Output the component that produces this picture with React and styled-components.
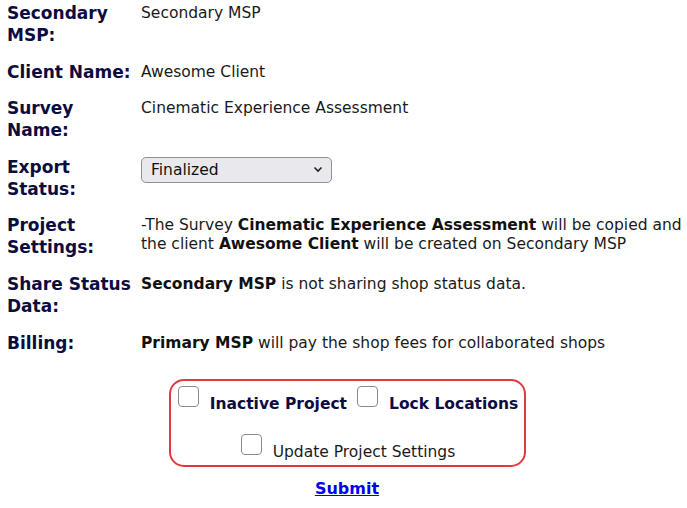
import React from "react";
import styled, { createGlobalStyle } from "styled-components";

const Global = createGlobalStyle`
  html, body { margin: 0; padding: 0; background: #fff; }
  body { font-family: "DejaVu Sans", Verdana, sans-serif; color: #1a1a1a; }
`;

const Page = styled.div`
  padding: 2px 0 0 7px;
  width: 687px;
  box-sizing: border-box;
`;

const Grid = styled.div`
  display: grid;
  grid-template-columns: 134px 1fr;
  row-gap: 14.6px;
`;

const Label = styled.div`
  font-family: "DejaVu Sans", Tahoma, sans-serif;
  font-weight: bold;
  font-size: 17px;
  line-height: 22px;
  color: #0c0c40;
`;

const Value = styled.div`
  font-size: 15.5px;
  line-height: 18.5px;
  padding-top: 2px;
  color: #1a1a1a;
  b { font-weight: bold; color: #111; }
`;

const Select = styled.div`
  width: 191px;
  height: 26px;
  box-sizing: border-box;
  margin-top: 1px;
  border: 1px solid #8f8f9d;
  border-radius: 5px;
  background: #e9e9ed;
  display: flex;
  align-items: center;
  justify-content: space-between;
  padding: 0 8px 0 9px;
  font-size: 15.5px;
  color: #111;
`;

const Actions = styled.div`
  display: flex;
  flex-direction: column;
  align-items: center;
  margin-top: 25px;
`;

const Box = styled.div`
  width: 357px;
  box-sizing: border-box;
  border: 2px solid #e03a3e;
  border-radius: 15px;
  padding: 8px 6px 4px 8px;
  display: flex;
  flex-direction: column;
  align-items: center;
  gap: 24px;
`;

const CheckRow = styled.div`
  display: flex;
  align-items: center;
  justify-content: center;
  gap: 10px;
  white-space: nowrap;
`;

const Check = styled.label`
  display: flex;
  align-items: center;
  gap: 11px;
  white-space: nowrap;
  font-size: 15.5px;
  font-weight: ${(p) => (p.$bold ? "bold" : "normal")};
  color: ${(p) => (p.$bold ? "#0c0c40" : "#1a1a1a")};
`;

const CheckBox = styled.span`
  width: 21px;
  height: 21px;
  box-sizing: border-box;
  border: 1px solid #8a8a94;
  border-radius: 4px;
  background: #fff;
  flex: none;
  margin-top: -8px;
`;

const Text = styled.span`
  margin-top: 6px;
`;

const Submit = styled.a`
  margin-top: 12px;
  font-size: 16px;
  font-weight: bold;
  color: #0000ee;
  text-decoration: underline;
  cursor: pointer;
`;

export default function App() {
  return (
    <>
      <Global />
      <Page>
        <Grid>
          <Label>Secondary<br />MSP:</Label>
          <Value>Secondary MSP</Value>
          <Label>Client Name:</Label>
          <Value>Awesome Client</Value>
          <Label>Survey<br />Name:</Label>
          <Value>Cinematic Experience Assessment</Value>
          <Label>Export<br />Status:</Label>
          <div>
            <Select>
              <span>Finalized</span>
              <svg width="10" height="7" viewBox="0 0 10 7">
                <path d="M1.5 1.5 L5 5 L8.5 1.5" fill="none" stroke="#222" strokeWidth="1.6" />
              </svg>
            </Select>
          </div>
          <Label>Project<br />Settings:</Label>
          <Value>
            -The Survey <b>Cinematic Experience Assessment</b> will be copied and the client <b>Awesome Client</b> will be created on Secondary MSP
          </Value>
          <Label>Share Status<br />Data:</Label>
          <Value><b>Secondary MSP</b> is not sharing shop status data.</Value>
          <Label>Billing:</Label>
          <Value><b>Primary MSP</b> will pay the shop fees for collaborated shops</Value>
        </Grid>
        <Actions>
          <Box>
            <CheckRow>
              <Check $bold><CheckBox /><Text>Inactive Project</Text></Check>
              <Check $bold><CheckBox /><Text>Lock Locations</Text></Check>
            </CheckRow>
            <CheckRow>
              <Check><CheckBox /><Text>Update Project Settings</Text></Check>
            </CheckRow>
          </Box>
          <Submit>Submit</Submit>
        </Actions>
      </Page>
    </>
  );
}
